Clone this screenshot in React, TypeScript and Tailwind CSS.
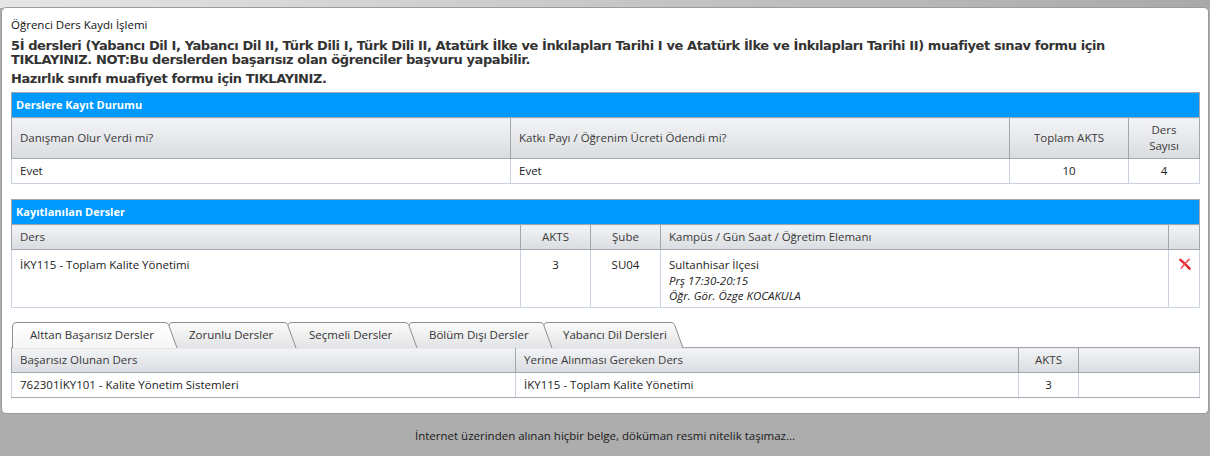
const seg = "font-['Open_Sans',_'Noto_Sans',_sans-serif]";

const headCell =
  "border border-[#a3a7ad] bg-gradient-to-b from-[#f3f4f6] to-[#d9dce0] text-[#3a3a3a] font-normal px-[8px]";
const dataCell = "border border-[#c9d3df] text-[#222] px-[8px]";

function BlueBar({ title, span }: { title: string; span: number }) {
  return (
    <tr>
      <td
        colSpan={span}
        className="h-[25px] bg-[#0099ff] border border-[#a3a7ad] px-[4px] text-white font-bold text-[11px]"
      >
        {title}
      </td>
    </tr>
  );
}

function RemoveIcon() {
  return (
    <svg width="13" height="12" viewBox="0 0 13 12">
      <path d="M1.5 1.5 Q6 5 11.5 11" stroke="#e0252b" strokeWidth="2.6" strokeLinecap="round" fill="none" />
      <path d="M11 1 Q6 5.5 2.5 10.5" stroke="#f04a4f" strokeWidth="1.6" strokeLinecap="round" fill="none" />
    </svg>
  );
}

type Tab = { label: string; width: number; pl: number; z: string; active?: boolean };

const tabs: Tab[] = [
  { label: "Alttan Başarısız Dersler", width: 166, pl: 18, z: "z-50", active: true },
  { label: "Zorunlu Dersler", width: 129, pl: 21, z: "z-40" },
  { label: "Seçmeli Dersler", width: 131, pl: 22, z: "z-30" },
  { label: "Bölüm Dışı Dersler", width: 145, pl: 21, z: "z-20" },
  { label: "Yabancı Dil Dersleri", width: 141, pl: 20, z: "z-10" },
];

function TabShape({ w, active }: { w: number; active?: boolean }) {
  const id = active ? "tabA" : "tabI";
  return (
    <svg className="absolute inset-0" width={w} height="26" viewBox={`0 0 ${w} 26`}>
      <defs>
        <linearGradient id={id} x1="0" y1="0" x2="0" y2="1">
          <stop offset="0" stopColor={active ? "#ffffff" : "#fbfbfb"} />
          <stop offset="1" stopColor={active ? "#f6f6f6" : "#e2e3e5"} />
        </linearGradient>
      </defs>
      <path
        d={`M0.5 26 L0.5 5 Q0.5 0.5 5 0.5 L${w - 13} 0.5 Q${w - 10.5} 0.5 ${w - 9.5} 2.5 L${w - 1} 26`}
        fill={`url(#${id})`}
        stroke="#8e8e8e"
        strokeWidth="1"
      />
    </svg>
  );
}

export default function App() {
  return (
    <div
      className={`w-[1210px] h-[456px] overflow-hidden ${seg} bg-[linear-gradient(to_bottom,transparent_0,transparent_8px,#adadad_8px),linear-gradient(to_right,#e6e6e6,#c4c4c4_55%,#a9a9a9)]`}
    >
      <div className="pt-[7px]">
        <div className="ml-[1px] w-[1208px] h-[407px] bg-white border border-[#9b9b9b] rounded-[5px] pl-[9px] pt-[9px]">
          <div className="h-[16px] leading-[16px] text-[11.5px] text-[#111]">Öğrenci Ders Kaydı İşlemi</div>

          <div className="mt-[6px] font-['DejaVu_Sans',_Verdana,_sans-serif] font-bold text-[13px] leading-[14px] tracking-[-0.4px] text-[#333] whitespace-nowrap">
            5İ dersleri (Yabancı Dil I, Yabancı Dil II, Türk Dili I, Türk Dili II, Atatürk İlke ve İnkılapları Tarihi I ve
            Atatürk İlke ve İnkılapları Tarihi II) muafiyet sınav formu için
            <br />
            TIKLAYINIZ. NOT:Bu derslerden başarısız olan öğrenciler başvuru yapabilir.
          </div>
          <div className="mt-[5px] font-['DejaVu_Sans',_Verdana,_sans-serif] font-bold text-[13px] leading-[14px] tracking-[-0.4px] text-[#333]">
            Hazırlık sınıfı muafiyet formu için TIKLAYINIZ.
          </div>

          <table className="mt-[6px] w-[1188px] table-fixed border-collapse text-[11.5px]">
            <colgroup>
              <col className="w-[499px]" />
              <col className="w-[499px]" />
              <col className="w-[119px]" />
              <col className="w-[71px]" />
            </colgroup>
            <tbody>
              <BlueBar title="Derslere Kayıt Durumu" span={4} />
              <tr className="h-[41px]">
                <td className={`${headCell} text-left`}>Danışman Olur Verdi mi?</td>
                <td className={`${headCell} text-left`}>Katkı Payı / Öğrenim Ücreti Ödendi mi?</td>
                <td className={`${headCell} text-center`}>Toplam AKTS</td>
                <td className={`${headCell} text-center leading-[16px]`}>
                  Ders
                  <br />
                  Sayısı
                </td>
              </tr>
              <tr className="h-[25px]">
                <td className={dataCell}>Evet</td>
                <td className={dataCell}>Evet</td>
                <td className={`${dataCell} text-center`}>10</td>
                <td className={`${dataCell} text-center`}>4</td>
              </tr>
            </tbody>
          </table>

          <table className="mt-[15px] w-[1188px] table-fixed border-collapse text-[11.5px]">
            <colgroup>
              <col className="w-[509px]" />
              <col className="w-[70px]" />
              <col className="w-[70px]" />
              <col className="w-[508px]" />
              <col className="w-[31px]" />
            </colgroup>
            <tbody>
              <BlueBar title="Kayıtlanılan Dersler" span={5} />
              <tr className="h-[25px]">
                <td className={`${headCell} text-left`}>Ders</td>
                <td className={`${headCell} text-center`}>AKTS</td>
                <td className={`${headCell} text-center`}>Şube</td>
                <td className={`${headCell} text-left`}>Kampüs / Gün Saat / Öğretim Elemanı</td>
                <td className={headCell}></td>
              </tr>
              <tr className="h-[58px] align-top leading-[15.5px]">
                <td className={`${dataCell} pt-[7px]`}>İKY115 - Toplam Kalite Yönetimi</td>
                <td className={`${dataCell} pt-[7px] text-center`}>3</td>
                <td className={`${dataCell} pt-[7px] text-center`}>SU04</td>
                <td className={`${dataCell} pt-[7px]`}>
                  <div>Sultanhisar İlçesi</div>
                  <div className="italic">Prş 17:30-20:15</div>
                  <div className="italic">Öğr. Gör. Özge KOCAKULA</div>
                </td>
                <td className={`${dataCell} pt-[8px] px-0`}>
                  <div className="flex justify-center pl-[2px]">
                    <RemoveIcon />
                  </div>
                </td>
              </tr>
            </tbody>
          </table>

          <div className="mt-[14px] flex h-[25px] pl-[1px]">
            {tabs.map((t, i) => (
              <div
                key={t.label}
                className={`relative h-[26px] ${t.z} ${i > 0 ? "-ml-[10px]" : ""}`}
                style={{ width: t.width }}
              >
                <TabShape w={t.width} active={t.active} />
                <div
                  className="relative text-[11.5px] text-[#333] leading-[25px] whitespace-nowrap"
                  style={{ paddingLeft: t.pl }}
                >
                  {t.label}
                </div>
              </div>
            ))}
          </div>

          <table className="w-[1188px] table-fixed border-collapse text-[11.5px]">
            <colgroup>
              <col className="w-[504px]" />
              <col className="w-[503px]" />
              <col className="w-[60px]" />
              <col className="w-[121px]" />
            </colgroup>
            <tbody>
              <tr className="h-[25px]">
                <td className={`${headCell} text-left`}>Başarısız Olunan Ders</td>
                <td className={`${headCell} text-left`}>Yerine Alınması Gereken Ders</td>
                <td className={`${headCell} text-center`}>AKTS</td>
                <td className={headCell}></td>
              </tr>
              <tr className="h-[25px]">
                <td className={`${dataCell} border-b-[#a9adb3]`}>762301İKY101 - Kalite Yönetim Sistemleri</td>
                <td className={`${dataCell} border-b-[#a9adb3]`}>İKY115 - Toplam Kalite Yönetimi</td>
                <td className={`${dataCell} border-b-[#a9adb3] text-center`}>3</td>
                <td className={`${dataCell} border-b-[#a9adb3]`}></td>
              </tr>
            </tbody>
          </table>
        </div>
      </div>

      <div className="mt-[14px] text-center text-[11.5px] leading-[16px] text-[#1a1a1a]">
        İnternet üzerinden alınan hiçbir belge, döküman resmi nitelik taşımaz...
      </div>
    </div>
  );
}
